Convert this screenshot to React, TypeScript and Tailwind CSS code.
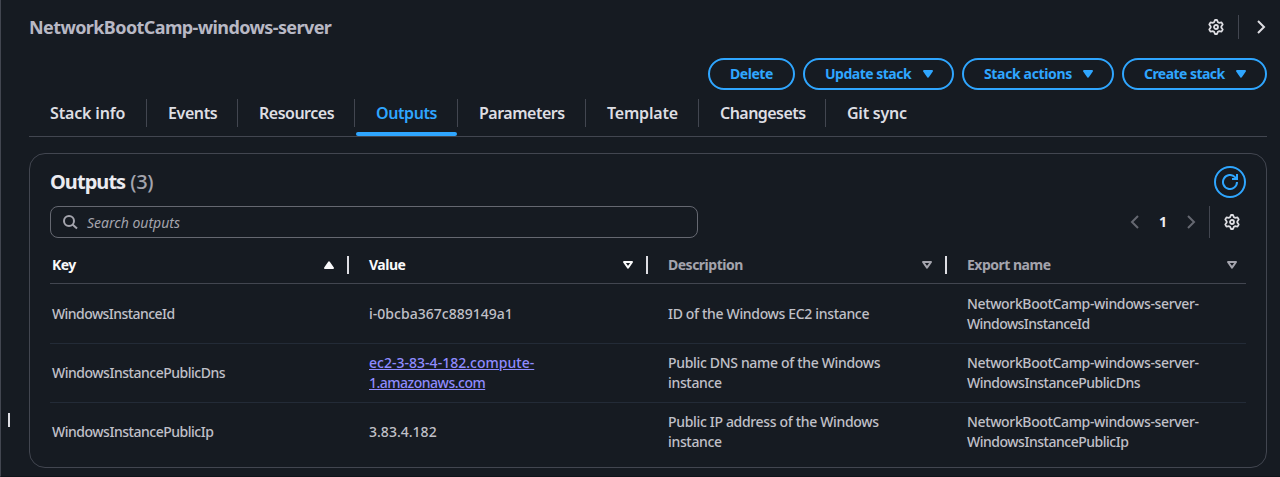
import React from "react";

type IconProps = { className?: string };

function GearIcon({ className = "" }: IconProps) {
  return (
    <svg viewBox="0 0 16 16" className={`size-4 shrink-0 ${className}`} fill="none" stroke="currentColor" strokeWidth="1.8" strokeLinejoin="round">
      <path d="M7 1h2l.9 2.2 1.1.6 2.5-.4 1.2 2L13.3 7.4v1.2l1.4 2-1.2 2-2.5-.4-1.1.6L9 15H7l-.9-2.2-1.1-.6-2.5.4-1.2-2 1.4-2V7.4l-1.4-2 1.2-2 2.5.4 1.1-.6z" />
      <circle cx="8" cy="8" r="2" />
    </svg>
  );
}

function ChevronIcon({ className = "", left = false }: IconProps & { left?: boolean }) {
  return (
    <svg viewBox="0 0 16 16" className={`size-4 shrink-0 ${className}`} fill="none" stroke="currentColor" strokeWidth="2">
      <path d={left ? "M11 2 5 8l6 6" : "M5 2l6 6-6 6"} />
    </svg>
  );
}

function SearchIcon({ className = "" }: IconProps) {
  return (
    <svg viewBox="0 0 16 16" className={`size-4 shrink-0 ${className}`} fill="none" stroke="currentColor" strokeWidth="2">
      <circle cx="7" cy="7" r="5" />
      <path d="m10.5 10.5 4.5 4" />
    </svg>
  );
}

function RefreshIcon({ className = "" }: IconProps) {
  return (
    <svg viewBox="0 0 16 16" className={`size-4 shrink-0 ${className}`} fill="none" stroke="currentColor" strokeWidth="2">
      <path d="M15 8a7 7 0 1 1-2-4.9L15 5" />
      <path d="M10 5h5V0" />
    </svg>
  );
}

function Caret({ kind, className = "" }: IconProps & { kind: "filled" | "up" | "outline" }) {
  return (
    <svg
      viewBox="0 0 16 16"
      className={`size-4 shrink-0 ${className}`}
      fill={kind === "outline" ? "none" : "currentColor"}
      stroke="currentColor"
      strokeWidth="2"
      strokeLinejoin="round"
    >
      <path d={kind === "up" ? "M4 11h8L8 5.4z" : "M4 5h8l-4 5.6z"} />
    </svg>
  );
}

const actions = [
  { label: "Delete", box: "w-[87px]", tracking: "tracking-[-0.45px]", menu: false },
  { label: "Update stack", box: "w-[151px]", tracking: "tracking-[-0.5px]", menu: true },
  { label: "Stack actions", box: "w-[152px]", tracking: "tracking-[-0.35px]", menu: true },
  { label: "Create stack", box: "w-[145px]", tracking: "tracking-[-0.55px]", menu: true },
];

const tabs = [
  { label: "Stack info", box: "w-[118px]", tracking: "tracking-[-0.15px]" },
  { label: "Events", box: "w-[91px]", tracking: "tracking-[-0.4px]" },
  { label: "Resources", box: "w-[117px]", tracking: "tracking-[-0.5px]" },
  { label: "Outputs", box: "w-[103px]", tracking: "tracking-[-0.4px]" },
  { label: "Parameters", box: "w-[128px]", tracking: "tracking-[-0.5px]" },
  { label: "Template", box: "w-[113px]", tracking: "tracking-[-0.2px]" },
  { label: "Changesets", box: "w-[127px]", tracking: "tracking-[-0.55px]" },
  { label: "Git sync", box: "w-[102px]", tracking: "tracking-[-0.25px]" },
];

const columns = [
  { label: "Key", active: true, icon: "up" as const },
  { label: "Value", active: true, icon: "outline" as const },
  { label: "Description", active: false, icon: "outline" as const },
  { label: "Export name", active: false, icon: "outline" as const },
];

const rows = [
  {
    key: "WindowsInstanceId",
    value: ["i-0bcba367c889149a1"],
    link: false,
    description: ["ID of the Windows EC2 instance"],
    exportName: ["NetworkBootCamp-windows-server-", "WindowsInstanceId"],
  },
  {
    key: "WindowsInstancePublicDns",
    value: ["ec2-3-83-4-182.compute-", "1.amazonaws.com"],
    link: true,
    description: ["Public DNS name of the Windows", "instance"],
    exportName: ["NetworkBootCamp-windows-server-", "WindowsInstancePublicDns"],
  },
  {
    key: "WindowsInstancePublicIp",
    value: ["3.83.4.182"],
    link: false,
    description: ["Public IP address of the Windows", "instance"],
    exportName: ["NetworkBootCamp-windows-server-", "WindowsInstancePublicIp"],
  },
];

function lineTracking(line: string) {
  if (line === "WindowsInstanceId") return "tracking-[-0.56px]";
  if (line.startsWith("Windows")) return "tracking-[-0.48px]";
  if (line.startsWith("1.")) return "tracking-[-0.5px]";
  if (/^(i-|ec2|3)/.test(line)) return "tracking-[0.02px]";
  if (line.startsWith("Network")) return "tracking-[-0.36px]";
  return "tracking-[-0.33px]";
}

function Lines({ text, className = "" }: { text: string[]; className?: string }) {
  return (
    <span className={className}>
      {text.map((line, i) => (
        <React.Fragment key={line}>
          {i > 0 && <br />}
          <span className={lineTracking(line)}>{line}</span>
        </React.Fragment>
      ))}
    </span>
  );
}

const grid = "grid grid-cols-[299px_299px_299px_299px]";

export default function App() {
  return (
    <div className="flex h-[477px] w-[1280px] overflow-hidden border-b border-l border-b-[#0f141a] border-l-[#424650] bg-[#161b22] font-['Noto_Sans','Open_Sans',sans-serif] text-sm leading-5 text-[#c0c0c8]">
      <div className="flex w-7 shrink-0 items-end pb-[49px] pl-[7px]">
        <div className="h-3.5 w-0.5 bg-[#dedee3]" />
      </div>

      <main className="w-[1238px] shrink-0">
        <header className="flex h-[58px] items-start justify-between pt-[15px]">
          <h1 className="text-lg leading-6 font-bold tracking-[-0.6px] text-[#b8b8c4]">NetworkBootCamp-windows-server</h1>
          <div className="-mr-0.5 flex h-6 items-center text-[#dedee3]">
            <GearIcon />
            <div className="mr-3.5 ml-[14px] h-6 w-px bg-[#424650]" />
            <ChevronIcon />
          </div>
        </header>

        <div className="flex h-8 justify-end gap-2">
          {actions.map((a) => (
            <button
              key={a.label}
              className={`flex h-8 shrink-0 items-center rounded-[20px] border-2 border-[#2fa6ff] pl-5 font-bold whitespace-nowrap text-[#2fa6ff] ${a.box}`}
            >
              <span className={a.tracking}>{a.label}</span>
              {a.menu && <Caret kind="filled" className="mr-4 ml-auto" />}
            </button>
          ))}
        </div>

        <nav className="flex h-[47px] border-b border-[#424650] pt-[9px]">
          {tabs.map((t) => {
            const selected = t.label === "Outputs";
            return (
              <div key={t.label} className={`flex shrink-0 flex-col ${t.box}`}>
                <div
                  className={`flex h-7 items-center pl-[21px] text-base font-semibold whitespace-nowrap ${t.tracking} ${
                    t.label === "Git sync" ? "" : "border-r border-[#424650]"
                  } ${selected ? "text-[#2fa6ff]" : "text-[#dedee3]"}`}
                >
                  {t.label}
                </div>
                {selected && <div className="mt-[5px] mr-px ml-px h-1 rounded-sm bg-[#2fa6ff]" />}
              </div>
            );
          })}
        </nav>

        <section className="mt-4 h-[315px] rounded-2xl border border-[#424650] px-5 pt-3">
          <div className="flex h-8 items-center justify-between">
            <h2 className="flex gap-[5px] text-xl leading-6 font-bold text-[#ebebf0]">
              <span className="tracking-[-0.95px]">Outputs</span>
              <span className="font-medium tracking-[-0.3px] text-[#a4a4ad]">(3)</span>
            </h2>
            <button className="flex size-8 items-center justify-center rounded-full border-2 border-[#2fa6ff] text-[#2fa6ff]">
              <RefreshIcon />
            </button>
          </div>

          <div className="mt-2 flex h-8 justify-between">
            <div className="flex w-[648px] items-center rounded-lg border border-[#656871] pl-[11px]">
              <SearchIcon className="text-[#a4a4ad]" />
              <span className="ml-[9px] pt-0.5 text-[#a4a4ad] italic">Search outputs</span>
            </div>
            <div className="mr-1.5 flex items-center">
              <ChevronIcon left className="text-[#656871]" />
              <span className="w-10 text-center font-bold text-[#ebebf0]">1</span>
              <ChevronIcon className="text-[#656871]" />
              <div className="mr-3.5 ml-[10px] h-8 w-px bg-[#424650]" />
              <GearIcon className="text-[#dedee3]" />
            </div>
          </div>

          <div className={`${grid} h-[46px] border-b border-[#424650] pt-[17px] font-bold`}>
            {columns.map((c, i) => (
              <div
                key={c.label}
                className={`flex h-5 items-center tracking-[-0.5px] ${i === 0 ? "pl-0.5" : "pl-5"} ${c.active ? "text-[#f9f9fa]" : "text-[#a4a4ad]"}`}
              >
                {c.label}
                <Caret kind={c.icon} className={`ml-auto ${i === 3 ? "mr-[6px]" : "mr-[10px]"}`} />
                {i < 3 && <div className="h-[18px] w-0.5 bg-[#dedee3]" />}
              </div>
            ))}
          </div>

          {rows.map((r, i) => (
            <div
              key={r.key}
              className={`${grid} items-center font-medium ${
                i === 0 ? "h-[60px] border-b" : i === 1 ? "h-[59px] border-b" : "h-[58px]"
              } border-[#232b37]`}
            >
              <div className="pl-0.5">
                <Lines text={[r.key]} />
              </div>
              <div className="pl-5">
                <Lines text={r.value} className={r.link ? "text-[#8f8bff] underline" : ""} />
              </div>
              <div className="pl-5">
                <Lines text={r.description} />
              </div>
              <div className="pl-5">
                <Lines text={r.exportName} />
              </div>
            </div>
          ))}
        </section>
      </main>
    </div>
  );
}
